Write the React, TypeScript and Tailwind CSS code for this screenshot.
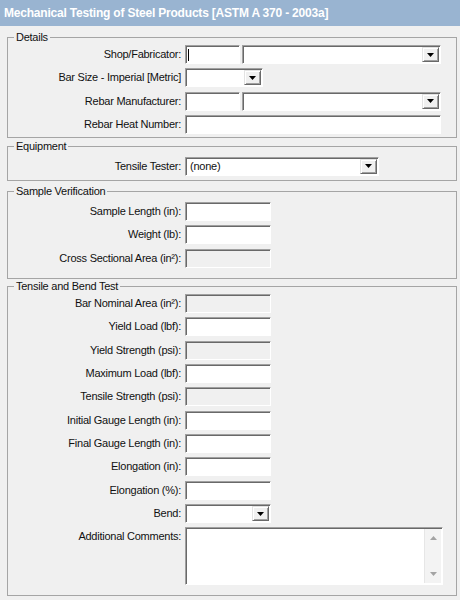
import type { ReactNode } from "react";

const sunken =
	"border border-t-[#a0a0a0] border-l-[#a0a0a0] border-r-white border-b-white shadow-[inset_1px_1px_0_#696969]";

function Arrow() {
	return (
		<div className="w-[17px] h-full shrink-0 flex items-center justify-center bg-[#f0f0f0] border border-t-[#e3e3e3] border-l-[#e3e3e3] border-r-[#696969] border-b-[#696969] shadow-[inset_1px_1px_0_#fff,inset_-1px_-1px_0_#a0a0a0]">
			<svg width="7" height="4" viewBox="0 0 7 4">
				<polygon points="0,0 7,0 3.5,4" fill="#000" />
			</svg>
		</div>
	);
}

function TextBox({ w, disabled, caret }: { w: string; disabled?: boolean; caret?: boolean }) {
	return (
		<div
			className={`h-[19px] shrink-0 flex items-center ${w} ${sunken} ${
				disabled ? "bg-[#f0f0f0]" : "bg-white"
			}`}
		>
			{caret && <span className="ml-[2px] w-px h-[12px] bg-black" />}
		</div>
	);
}

function Select({ w, value }: { w: string; value?: string }) {
	return (
		<div className={`h-[19px] shrink-0 flex items-stretch p-[1px] bg-white ${w} ${sunken}`}>
			<div className="flex-1 flex items-center pl-[3px] leading-none">{value}</div>
			<Arrow />
		</div>
	);
}

function Row({ label, children }: { label: string; children: ReactNode }) {
	return (
		<div className="flex items-start gap-[4px]">
			<div className="w-[173px] shrink-0 text-right leading-[19px] whitespace-nowrap">{label}</div>
			<div className="flex gap-[2px]">{children}</div>
		</div>
	);
}

function Group({
	title,
	className,
	children,
}: {
	title: string;
	className: string;
	children: ReactNode;
}) {
	return (
		<fieldset className={`ml-[7px] w-[450px] border border-[#a5a5a5] ${className}`}>
			<legend className="ml-[6px] px-[2px] leading-[13px]">{title}</legend>
			<div className="flex flex-col gap-[4.33px]">{children}</div>
		</fieldset>
	);
}

export default function App() {
	return (
		<div className="w-[460px] h-[600px] overflow-hidden bg-[#f0f0f0] text-[11px] tracking-[-0.25px] text-[#111] font-['Liberation_Sans',Arial,sans-serif]">
			<div className="h-[26px] bg-[#99b4d1] px-[4px] flex items-center text-white font-bold text-[12px] tracking-[-0.2px]">
				Mechanical Testing of Steel Products [ASTM A 370 - 2003a]
			</div>

			<Group title="Details" className="mt-[5px] pt-[1px] pb-[3px]">
				<Row label="Shop/Fabricator:">
					<TextBox w="w-[55px]" caret />
					<Select w="w-[199px]" />
				</Row>
				<Row label="Bar Size - Imperial [Metric]">
					<Select w="w-[78px]" />
				</Row>
				<Row label="Rebar Manufacturer:">
					<TextBox w="w-[55px]" />
					<Select w="w-[199px]" />
				</Row>
				<Row label="Rebar Heat Number:">
					<TextBox w="w-[256px]" />
				</Row>
			</Group>

			<Group title="Equipment" className="mt-[2px] pt-[4px] pb-[4px]">
				<Row label="Tensile Tester:">
					<Select w="w-[194px]" value="(none)" />
				</Row>
			</Group>

			<Group title="Sample Verification" className="mt-[4.5px] pt-[3.5px] pb-[10px]">
				<Row label="Sample Length (in):">
					<TextBox w="w-[86px]" />
				</Row>
				<Row label="Weight (lb):">
					<TextBox w="w-[86px]" />
				</Row>
				<Row label="Cross Sectional Area (in²):">
					<TextBox w="w-[86px]" disabled />
				</Row>
			</Group>

			<Group title="Tensile and Bend Test" className="mt-[1px] pt-[1.5px] pb-[10px]">
				<Row label="Bar Nominal Area (in²):">
					<TextBox w="w-[86px]" disabled />
				</Row>
				<Row label="Yield Load (lbf):">
					<TextBox w="w-[86px]" />
				</Row>
				<Row label="Yield Strength (psi):">
					<TextBox w="w-[86px]" disabled />
				</Row>
				<Row label="Maximum Load (lbf):">
					<TextBox w="w-[86px]" />
				</Row>
				<Row label="Tensile Strength (psi):">
					<TextBox w="w-[86px]" disabled />
				</Row>
				<Row label="Initial Gauge Length (in):">
					<TextBox w="w-[86px]" />
				</Row>
				<Row label="Final Gauge Length (in):">
					<TextBox w="w-[86px]" />
				</Row>
				<Row label="Elongation (in):">
					<TextBox w="w-[86px]" />
				</Row>
				<Row label="Elongation (%):">
					<TextBox w="w-[86px]" />
				</Row>
				<Row label="Bend:">
					<Select w="w-[86px]" />
				</Row>
				<Row label="Additional Comments:">
					<div className={`h-[58px] w-[258px] flex justify-end p-[1px] bg-white ${sunken}`}>
						<div className="w-[17px] h-full flex flex-col justify-between items-center py-[7px] bg-[#f3f3f3] border-l border-[#e6e6e6]">
							<svg width="7" height="4" viewBox="0 0 7 4">
								<polygon points="0,4 7,4 3.5,0" fill="#a3a3a3" />
							</svg>
							<svg width="7" height="4" viewBox="0 0 7 4">
								<polygon points="0,0 7,0 3.5,4" fill="#a3a3a3" />
							</svg>
						</div>
					</div>
				</Row>
			</Group>
		</div>
	);
}
